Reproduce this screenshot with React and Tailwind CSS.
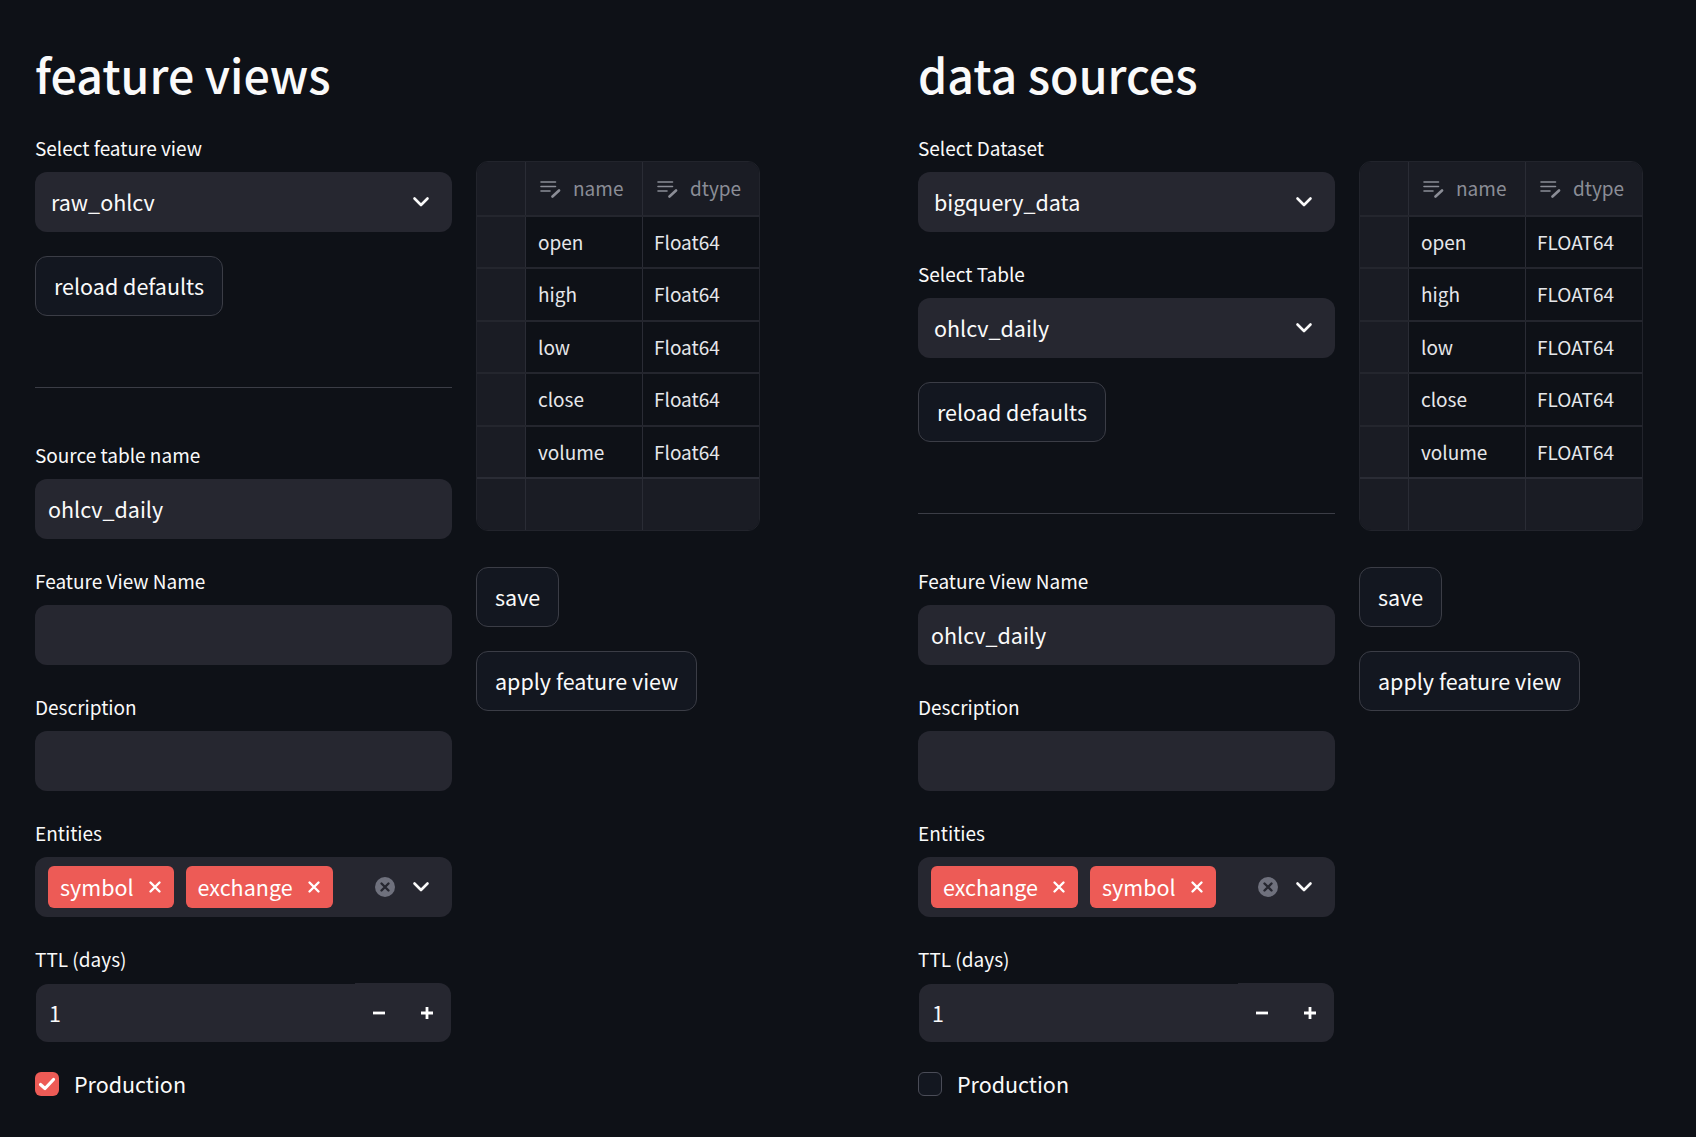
const fields = ['open', 'high', 'low', 'close', 'volume']

function Chevron() {
  return (
    <svg width="18" height="12" viewBox="0 0 18 12" fill="none" stroke="#fafafa" strokeWidth="2.6" strokeLinecap="round" strokeLinejoin="round">
      <path d="M2.5 2.5 9 9l6.5-6.5" />
    </svg>
  )
}

function Field({ label, children, className = '' }) {
  return (
    <div className={className}>
      <div className="h-[36px] text-[19px] leading-[24px] text-[#fafafa]">{label}</div>
      {children}
    </div>
  )
}

function Select({ value }) {
  return (
    <div className="flex h-[60px] items-center justify-between rounded-[12px] bg-[#262730] pl-[16px] pr-[22px] text-[21.500px] text-[#fafafa]">
      <span>{value}</span>
      <Chevron />
    </div>
  )
}

function TextInput({ value }) {
  return <div className="flex h-[60px] items-center rounded-[12px] bg-[#262730] px-[13px] text-[21.500px] text-[#fafafa]">{value}</div>
}

function Button({ children, className = '' }) {
  return (
    <div className={`flex h-[60px] w-fit items-center rounded-[12px] border border-[#3b3d46] bg-[#131720] px-[18px] text-[21.500px] text-[#fafafa] ${className}`}>
      {children}
    </div>
  )
}

function Tag({ children }) {
  return (
    <div className="flex h-[42px] items-center rounded-[6px] bg-[#ed5b56] pl-[12px] pr-[12px] text-[21.500px] text-white">
      <span>{children}</span>
      <svg className="ml-[14px]" width="14" height="14" viewBox="0 0 14 14" stroke="#fff" strokeWidth="2.4" strokeLinecap="round">
        <path d="M2.5 2.5l9 9M11.500 2.500l-9 9" />
      </svg>
    </div>
  )
}

function Entities({ items }) {
  return (
    <div className="flex h-[60px] items-center rounded-[12px] bg-[#262730] pl-[13px] pr-[22px]">
      <div className="flex flex-1 gap-[12px]">
        {items.map((item) => <Tag key={item}>{item}</Tag>)}
      </div>
      <svg width="20" height="20" viewBox="0 0 20 20" className="mr-[17px]">
        <circle cx="10" cy="10" r="10" fill="#6f717d" />
        <path d="M6.5 6.5l7 7M13.500 6.500l-7 7" stroke="#262730" strokeWidth="2.4" strokeLinecap="round" />
      </svg>
      <Chevron />
    </div>
  )
}

function NumberInput() {
  return (
    <div className="mx-px flex h-[59px] text-[#fafafa]">
      <div className="mt-px flex flex-1 items-center rounded-l-[12px] bg-[#262730] pl-[13px] text-[21.500px]">1</div>
      <div className="flex w-[96px] items-center rounded-r-[12px] bg-[#262730]">
        <svg className="ml-[17px]" width="14" height="14" viewBox="0 0 14 14" stroke="#fff" strokeWidth="2.8">
          <path d="M1 7h12" />
        </svg>
        <svg className="ml-[34px]" width="14" height="14" viewBox="0 0 14 14" stroke="#fff" strokeWidth="2.8">
          <path d="M1 7h12M7 1v12" />
        </svg>
      </div>
    </div>
  )
}

function Production({ checked }) {
  return (
    <div className="mt-[30px] flex h-[24px] items-center gap-[15px] text-[21.500px] text-[#fafafa]">
      {checked ? (
        <div className="flex size-[24px] items-center justify-center rounded-[6px] bg-[#ed5b56]">
          <svg width="18" height="14" viewBox="0 0 18 14" fill="none" stroke="#fff" strokeWidth="3.2" strokeLinecap="round" strokeLinejoin="round">
            <path d="M2.5 7.5 7 11.5 15.5 2.5" />
          </svg>
        </div>
      ) : (
        <div className="size-[24px] rounded-[6px] border border-[#4a4c57] bg-[#131720]" />
      )}
      <span>Production</span>
    </div>
  )
}

function HeaderIcon() {
  return (
    <svg width="22" height="18" viewBox="0 0 22 18" fill="none" stroke="#8b8d96" strokeWidth="1.600" strokeLinecap="round">
      <path d="M1 2h14.500M1 6.500h14.500M1 11h9" />
      <path d="M12.500 16.500 19 10.500" strokeWidth="2.600" />
    </svg>
  )
}

function HeaderCell({ children }) {
  return (
    <div className="flex items-center gap-[11px] border-l border-[#2a2c35] pl-[14px] text-[19px] text-[#8b8d96]">
      <HeaderIcon />
      <span>{children}</span>
    </div>
  )
}

function SchemaTable({ dtype }) {
  return (
    <div className="mt-[25px] w-[284px] overflow-hidden rounded-[12px] border border-[#22242c] bg-[#0e1117]">
      <div className="grid h-[53px] grid-cols-[48px_117px_117px] bg-[#1a1c24]">
        <div />
        <HeaderCell>name</HeaderCell>
        <HeaderCell>dtype</HeaderCell>
      </div>
      {fields.map((field) => (
        <div key={field} className="grid h-[52.400px] grid-cols-[48px_117px_117px] border-t-2 border-[#24262e] text-[19px] text-[#e6e7ea]">
          <div className="bg-[#1a1c24]" />
          <div className="flex items-center border-l border-[#2a2c35] pl-[12px]">{field}</div>
          <div className="flex items-center border-l border-[#2a2c35] pl-[11px]">{dtype}</div>
        </div>
      ))}
      <div className="grid h-[53px] grid-cols-[48px_117px_117px] border-t-2 border-[#2a2c35] bg-[#1a1c24]">
        <div />
        <div className="border-l border-[#2a2c35]" />
        <div className="border-l border-[#2a2c35]" />
      </div>
    </div>
  )
}

function Panel({ title, top, entities, checked, dtype, sourceName, viewName }) {
  return (
    <div className="w-[883px] shrink-0">
      <h1 className="h-[136px] pt-[41px] text-[46.500px] font-medium leading-[65px] text-[#fafafa]">{title}</h1>
      <div className="flex gap-[24px]">
        <div className="w-[417px] shrink-0">
          {top}
          <hr className="mt-[71px] border-[#3b3d46]" />
          {sourceName !== undefined && (
            <Field label="Source table name" className="mt-[55px]"><TextInput value={sourceName} /></Field>
          )}
          <Field label="Feature View Name" className={sourceName !== undefined ? 'mt-[30px]' : 'mt-[55px]'}><TextInput value={viewName} /></Field>
          <Field label="Description" className="mt-[30px]"><TextInput value="" /></Field>
          <Field label="Entities" className="mt-[30px]"><Entities items={entities} /></Field>
          <Field label="TTL (days)" className="mt-[30px]"><NumberInput /></Field>
          <Production checked={checked} />
        </div>
        <div>
          <SchemaTable dtype={dtype} />
          <Button className="mt-[36px]">save</Button>
          <Button className="mt-[24px]">apply feature view</Button>
        </div>
      </div>
    </div>
  )
}

export default function App() {
  return (
    <div className="flex h-[1137px] overflow-hidden bg-[#0e1117] pl-[35px] font-['Noto_Sans_CJK_SC','Noto_Sans',sans-serif]">
      <Panel
        title="feature views"
        entities={['symbol', 'exchange']}
        checked
        dtype="Float64"
        sourceName="ohlcv_daily"
        viewName=""
        top={
          <>
            <Field label="Select feature view"><Select value="raw_ohlcv" /></Field>
            <Button className="mt-[24px]">reload defaults</Button>
          </>
        }
      />
      <Panel
        title="data sources"
        entities={['exchange', 'symbol']}
        checked={false}
        dtype="FLOAT64"
        viewName="ohlcv_daily"
        top={
          <>
            <Field label="Select Dataset"><Select value="bigquery_data" /></Field>
            <Field label="Select Table" className="mt-[30px]"><Select value="ohlcv_daily" /></Field>
            <Button className="mt-[24px]">reload defaults</Button>
          </>
        }
      />
    </div>
  )
}
